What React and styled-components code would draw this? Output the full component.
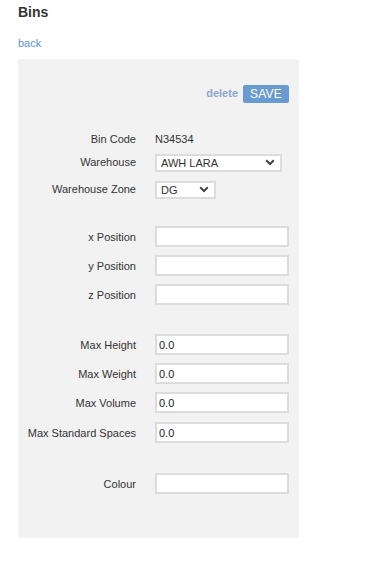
import React from "react"
import styled, { createGlobalStyle } from "styled-components"

const GlobalStyle = createGlobalStyle`
    html, body {
        margin: 0;
        padding: 0;
        background: #fff;
    }
    body {
        font-family: "Liberation Sans", Arial, sans-serif;
        color: #333;
    }
`

const Page = styled.div`
    padding: 0 18px;
    width: 281px;
`

const Title = styled.h2`
    margin: 0;
    padding-top: 4px;
    font: 700 14px/16px "Liberation Sans", Arial, sans-serif;
    color: #333;
`

const BackLink = styled.a`
    display: block;
    margin-top: 16px;
    font: 400 11px/14px "Liberation Sans", Arial, sans-serif;
    color: #5b93cf;
    text-decoration: none;
`

const Panel = styled.div`
    margin-top: 9px;
    background: #f2f2f2;
    border-radius: 3px;
    padding: 26px 10px 44px 10px;
    box-sizing: border-box;
    height: 479px;
`

const Actions = styled.div`
    display: flex;
    justify-content: flex-end;
    align-items: center;
    gap: 5px;
    height: 18px;
`

const DeleteLink = styled.a`
    font: 700 11px "Liberation Sans", Arial, sans-serif;
    color: #8aa6c9;
    margin-top: -3px;
    cursor: pointer;
`

const SaveButton = styled.button`
    width: 46px;
    height: 18px;
    padding: 0;
    border: none;
    border-radius: 2px;
    background: #6a9bd0;
    color: #fff;
    font: 400 12px "Liberation Sans", Arial, sans-serif;
    letter-spacing: 0.2px;
`

const Row = styled.div`
    display: flex;
    align-items: center;
    gap: 19px;
    height: ${props => props.$h}px;
    margin-top: ${props => props.$mt}px;
`

const Label = styled.label`
    width: 108px;
    flex: none;
    display: flex;
    justify-content: flex-end;
    white-space: nowrap;
    font: 400 11px "Liberation Sans", Arial, sans-serif;
    color: #333;
`

const Value = styled.span`
    font: 400 11px "Liberation Sans", Arial, sans-serif;
    color: #333;
`

const Input = styled.input`
    width: 134px;
    height: 21px;
    box-sizing: border-box;
    border: 2px solid #dcdcdc;
    background: #fff;
    padding: 0 2px;
    font: 400 11px "Liberation Sans", Arial, sans-serif;
    color: #222;
    outline: none;
`

const SelectWrap = styled.div`
    position: relative;
    width: ${props => props.$w}px;
    height: 18px;
`

const Select = styled.select`
    appearance: none;
    width: 100%;
    height: 100%;
    box-sizing: border-box;
    border: 2px solid #dcdcdc;
    border-radius: 0;
    background: #fff;
    padding: 0 4px;
    font: 400 11px "Liberation Sans", Arial, sans-serif;
    color: #333;
    outline: none;
`

const Chevron = styled.svg`
    position: absolute;
    right: 7px;
    top: 6px;
    pointer-events: none;
`

function Dropdown({ width, value }) {
    return (
        <SelectWrap $w={width}>
            <Select defaultValue={value}>
                <option>{value}</option>
            </Select>
            <Chevron width="10" height="7" viewBox="0 0 10 7">
                <path d="M1.2 1.2l3.8 3.8 3.8-3.8" fill="none" stroke="#444" strokeWidth="2" />
            </Chevron>
        </SelectWrap>
    )
}

const fields = [
    { label: "x Position", mt: 28, value: "" },
    { label: "y Position", mt: 8, value: "" },
    { label: "z Position", mt: 8, value: "" },
    { label: "Max Height", mt: 29, value: "0.0" },
    { label: "Max Weight", mt: 8, value: "0.0" },
    { label: "Max Volume", mt: 8, value: "0.0" },
    { label: "Max Standard Spaces", mt: 9, value: "0.0" },
    { label: "Colour", mt: 30, value: "" },
]

export default function App() {
    return (
        <>
            <GlobalStyle />
            <Page>
                <Title>Bins</Title>
                <BackLink href="#">back</BackLink>
                <Panel>
                    <Actions>
                        <DeleteLink>delete</DeleteLink>
                        <SaveButton>SAVE</SaveButton>
                    </Actions>
                    <Row $h={14} $mt={29}>
                        <Label>Bin Code</Label>
                        <Value>N34534</Value>
                    </Row>
                    <Row $h={18} $mt={7}>
                        <Label>Warehouse</Label>
                        <Dropdown width={127} value="AWH LARA" />
                    </Row>
                    <Row $h={18} $mt={9}>
                        <Label>Warehouse Zone</Label>
                        <Dropdown width={61} value="DG" />
                    </Row>
                    {fields.map((field, index) => (
                        <Row $h={21} $mt={field.mt} key={index}>
                            <Label>{field.label}</Label>
                            <Input defaultValue={field.value} />
                        </Row>
                    ))}
                </Panel>
            </Page>
        </>
    )
}
